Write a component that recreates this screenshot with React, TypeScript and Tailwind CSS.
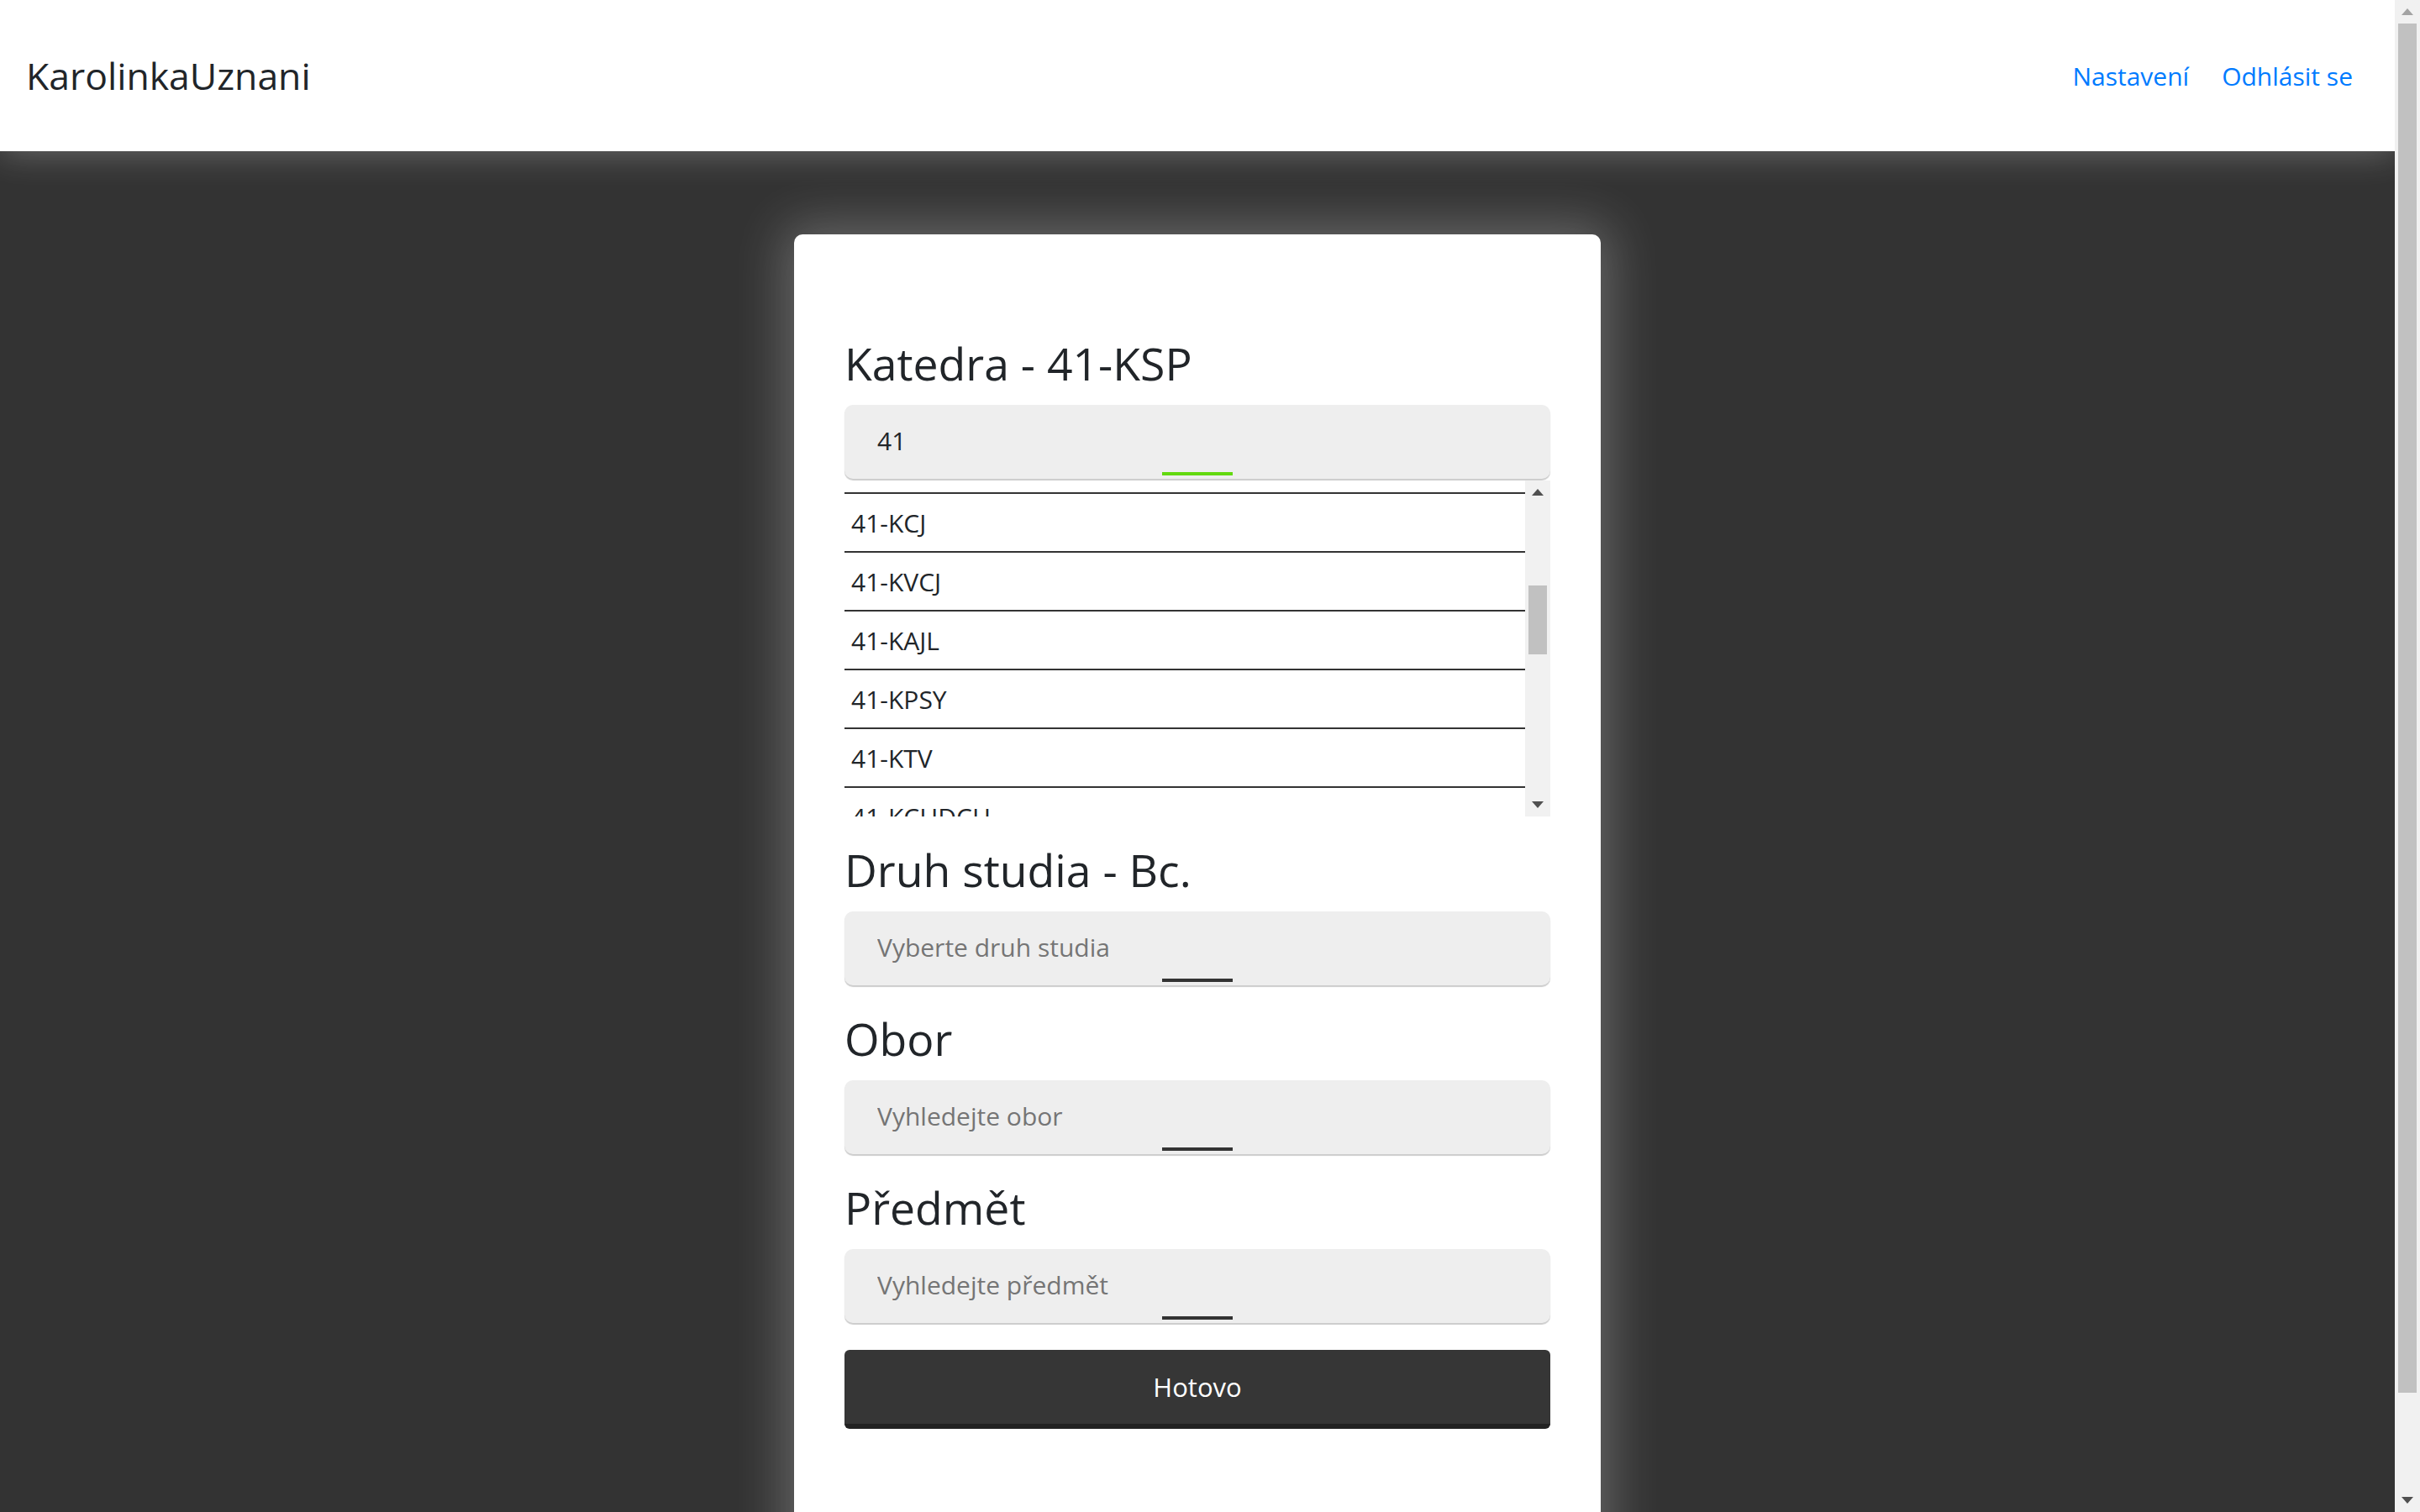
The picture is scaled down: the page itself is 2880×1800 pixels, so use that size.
const FONT = "font-['Open_Sans','Noto_Sans',sans-serif]";

// list of departments matching the "41" query; only a window of it is visible
const KATEDRY = [
  "41-KSP", "41-KPP", "41-KMT", "41-KBI", "41-KFY", "41-KGE", "41-KHI",
  "41-KCJ", "41-KVCJ", "41-KAJL", "41-KPSY", "41-KTV", "41-KCHDCH",
  "41-KNJ", "41-KRJ", "41-KHV", "41-KVV", "41-KIN", "41-KTCH", "41-KPE",
  "41-KSV", "41-KOS", "41-KFI", "41-KZP",
];
const ROW = 70;
const LIST_H = 400;
const LIST_SCROLL = 474;
const FIRST_VISIBLE = 7;

const PAGE_H = 1800;
const PAGE_CONTENT_H = 1926;

// classic scrollbar: 28px arrow cells top and bottom, thumb inside the rest
function Scrollbar({
  viewport,
  content,
  offset,
  upDisabled,
}: {
  viewport: number;
  content: number;
  offset: number;
  upDisabled?: boolean;
}) {
  const track = viewport - 56;
  const thumbTop = 28 + Math.round((offset / content) * track);
  const thumbHeight = Math.round((viewport / content) * track);
  return (
    <div className="relative w-[30px] shrink-0 bg-[#f1f1f1]">
      <span
        className={`absolute left-1/2 top-[10px] -translate-x-1/2 border-x-[7px] border-b-[8px] border-x-transparent ${upDisabled ? "border-b-[#a3a3a3]" : "border-b-[#505050]"}`}
      />
      <span className="absolute left-[4px] right-[4px] bg-[#c1c1c1]" style={{ top: thumbTop, height: thumbHeight }} />
      <span className="absolute bottom-[10px] left-1/2 -translate-x-1/2 border-x-[7px] border-t-[8px] border-x-transparent border-t-[#505050]" />
    </div>
  );
}

function Field({ value, placeholder, active }: { value?: string; placeholder?: string; active?: boolean }) {
  return (
    <div className="relative h-[88px] rounded-[10px] bg-[#eeeeee] shadow-[0_2px_1px_rgba(0,0,0,0.2)]">
      <input
        readOnly
        value={value ?? ""}
        placeholder={placeholder}
        className="h-full w-full bg-transparent pb-[4px] pl-[39px] text-[30px] text-[#212529] outline-none placeholder:text-[#757575]"
      />
      <span
        className={`absolute bottom-[4px] left-1/2 h-[4px] w-[84px] -translate-x-1/2 ${active ? "bg-[#63d90f]" : "bg-[#333333]"}`}
      />
    </div>
  );
}

function Heading({ children }: { children: string }) {
  return <h2 className="mb-[17px] text-[53.5px] leading-[65px] text-[#212529]">{children}</h2>;
}

function KatedraList() {
  // rows that fall inside the 400px window at the current scroll position
  const visible = KATEDRY.slice(FIRST_VISIBLE, FIRST_VISIBLE + 6);
  const lead = FIRST_VISIBLE * ROW - LIST_SCROLL;
  return (
    <div className="mt-[2px] flex h-[400px] bg-white">
      <ul className="min-w-0 flex-1 overflow-hidden">
        <li className="border-b-2 border-[#333333]" style={{ height: lead }} />
        {visible.map((k) => (
          <li key={k} className="flex h-[70px] items-center border-b-2 border-[#333333] pl-[8px] text-[30px] text-[#212529]">
            {k}
          </li>
        ))}
      </ul>
      <Scrollbar viewport={LIST_H} content={KATEDRY.length * ROW} offset={LIST_SCROLL} />
    </div>
  );
}

export default function App() {
  return (
    <div className={`flex h-screen overflow-hidden bg-[#333333] ${FONT}`}>
      <div className="min-w-0 flex-1 overflow-hidden">
        <header className="relative z-10 flex h-[180px] items-center justify-between bg-white pl-[31px] pr-[50px] shadow-[0_0_40px_rgba(255,255,255,0.3)]">
          <a className="text-[44.5px] text-[#212529]">KarolinkaUznani</a>
          <nav className="flex gap-[39px] text-[30px] text-[#007bff]">
            <a>Nastavení</a>
            <a>Odhlásit se</a>
          </nav>
        </header>

        <main className="flex justify-center pt-[99px]">
          <div className="w-[960px] rounded-[10px] bg-white px-[60px] pt-[121px] pb-[224px] shadow-[0_0_60px_12px_rgba(255,255,255,0.25)]">
            <Heading>Katedra - 41-KSP</Heading>
            <Field value="41" active />
            <KatedraList />

            <div className="mt-[31px]">
              <Heading>Druh studia - Bc.</Heading>
              <Field placeholder="Vyberte druh studia" />
            </div>

            <div className="mt-[31px]">
              <Heading>Obor</Heading>
              <Field placeholder="Vyhledejte obor" />
            </div>

            <div className="mt-[31px]">
              <Heading>Předmět</Heading>
              <Field placeholder="Vyhledejte předmět" />
            </div>

            <button className="mt-[32px] h-[94px] w-full rounded-[6px] border-b-[6px] border-[#222222] bg-[#363636] text-[31px] text-white">
              Hotovo
            </button>
          </div>
        </main>
      </div>
      <Scrollbar viewport={PAGE_H} content={PAGE_CONTENT_H} offset={0} upDisabled />
    </div>
  );
}
